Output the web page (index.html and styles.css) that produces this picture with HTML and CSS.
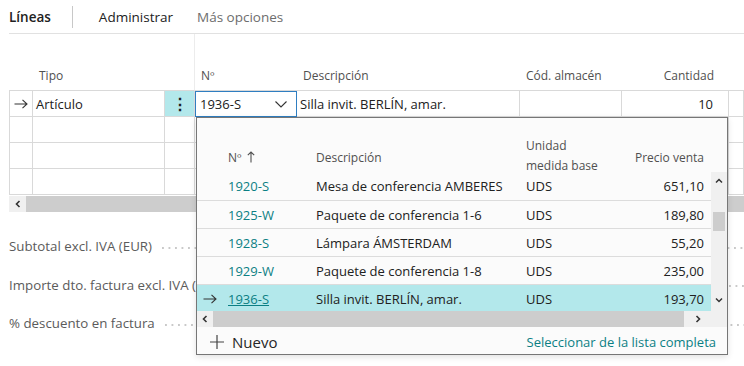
FILE: index.html
```html
<!DOCTYPE html>
<html lang="es">
<head>
    <meta charset="UTF-8">
    <title>Líneas</title>
    <link rel="stylesheet" href="styles.css">
</head>
<body>
<div class="page">
    <div class="tabs">
        <span class="tab active">Líneas</span>
        <span class="tab-sep"></span>
        <span class="tab">Administrar</span>
        <span class="tab muted">Más opciones</span>
    </div>

    <div class="lines">
        <div class="grid">
            <div class="hd"></div>
            <div class="hd">Tipo</div>
            <div class="hd frozen"></div>
            <div class="hd">Nº</div>
            <div class="hd">Descripción</div>
            <div class="hd">Cód. almacén</div>
            <div class="hd num">Cantidad</div>
            <div class="hd"></div>

            <!-- current line -->
            <div class="cell first"><svg class="arrow" width="14" height="10" viewBox="0 0 14 10"><path d="M0.5 5H13M8.5 0.8L13 5L8.5 9.2" fill="none" stroke="#333" stroke-width="1.1"/></svg></div>
            <div class="cell">Artículo</div>
            <div class="cell dots">⋮</div>
            <div class="cell input">1936-S <svg width="12" height="7" viewBox="0 0 12 7"><path d="M0.5 0.5L6 6L11.5 0.5" fill="none" stroke="#333" stroke-width="1.1"/></svg></div>
            <div class="cell">Silla invit. BERLÍN, amar.</div>
            <div class="cell"></div>
            <div class="cell num">10</div>
            <div class="cell"></div>

            <div class="cell first"></div><div class="cell"></div><div class="cell"></div><div class="cell"></div><div class="cell"></div><div class="cell"></div><div class="cell"></div><div class="cell"></div>
            <div class="cell first"></div><div class="cell"></div><div class="cell"></div><div class="cell"></div><div class="cell"></div><div class="cell"></div><div class="cell"></div><div class="cell"></div>
            <div class="cell first"></div><div class="cell"></div><div class="cell"></div><div class="cell"></div><div class="cell"></div><div class="cell"></div><div class="cell"></div><div class="cell"></div>
        </div>
        <div class="hscroll">
            <span class="sbtn"><svg width="8" height="8" viewBox="0 0 8 8"><path d="M5.5 1L2.5 4L5.5 7" fill="none" stroke="#333" stroke-width="1.6"/></svg></span>
            <span class="thumb"></span>
        </div>
    </div>

    <div class="summary">
        <div class="sum-row"><span class="label">Subtotal excl. IVA (EUR)</span><span class="leader"></span></div>
        <div class="sum-row"><span class="label">Importe dto. factura excl. IVA (EUR)</span><span class="leader"></span></div>
        <div class="sum-row"><span class="label">% descuento en factura</span><span class="leader"></span></div>
    </div>

    <!-- lookup popup for the Nº field -->
    <div class="lookup">
        <div class="lk-head">
            <div></div>
            <div>Nº<svg width="8" height="12" viewBox="0 0 8 12"><path d="M4 11.5V1M0.8 4.2L4 1L7.2 4.2" fill="none" stroke="#505050" stroke-width="1.1"/></svg></div>
            <div>Descripción</div>
            <div class="two">Unidad<br>medida base</div>
            <div class="num">Precio venta</div>
            <div></div>
        </div>
        <div class="lk-body">
            <div class="lk-list">
                <div class="lk-row"><div></div><div class="code">1920-S</div><div>Mesa de conferencia AMBERES</div><div>UDS</div><div class="num">651,10</div></div>
                <div class="lk-row"><div></div><div class="code">1925-W</div><div>Paquete de conferencia 1-6</div><div>UDS</div><div class="num">189,80</div></div>
                <div class="lk-row"><div></div><div class="code">1928-S</div><div>Lámpara ÁMSTERDAM</div><div>UDS</div><div class="num">55,20</div></div>
                <div class="lk-row"><div></div><div class="code">1929-W</div><div>Paquete de conferencia 1-8</div><div>UDS</div><div class="num">235,00</div></div>
                <div class="lk-row selected"><div class="mark"><svg width="14" height="10" viewBox="0 0 14 10"><path d="M0.5 5H13M8.5 0.8L13 5L8.5 9.2" fill="none" stroke="#333" stroke-width="1.1"/></svg></div><div class="code link">1936-S</div><div>Silla invit. BERLÍN, amar.</div><div>UDS</div><div class="num">193,70</div></div>
            </div>
            <div class="vscroll">
                <span class="vbtn"><svg width="8" height="6" viewBox="0 0 8 6"><path d="M1 4.5L4 1.5L7 4.5" fill="none" stroke="#333" stroke-width="1.5"/></svg></span>
                <span class="vthumb"></span>
                <span class="vspace"></span>
                <span class="vbtn"><svg width="8" height="6" viewBox="0 0 8 6"><path d="M1 1.5L4 4.5L7 1.5" fill="none" stroke="#333" stroke-width="1.5"/></svg></span>
                <span class="vcorner"></span>
            </div>
            <div class="lk-hscroll">
                <span class="sbtn"><svg width="8" height="8" viewBox="0 0 8 8"><path d="M5.5 1L2.5 4L5.5 7" fill="none" stroke="#333" stroke-width="1.6"/></svg></span>
                <span class="thumb"></span>
                <span class="sbtn"><svg width="8" height="8" viewBox="0 0 8 8"><path d="M2.5 1L5.5 4L2.5 7" fill="none" stroke="#333" stroke-width="1.6"/></svg></span>
            </div>
        </div>
        <div class="lk-foot">
            <span class="new"><svg width="14" height="14" viewBox="0 0 14 14"><path d="M7 0V14M0 7H14" fill="none" stroke="#444" stroke-width="1.2"/></svg> Nuevo</span>
            <span class="full">Seleccionar de la lista completa</span>
        </div>
    </div>
</div>
</body>
</html>
```

FILE: styles.css
```css
body {
    margin: 0;
    font-family: "Open Sans", "Noto Sans", sans-serif;
    font-size: 13px;
    color: #212121;
    background-color: #fff;
}

.page {
    position: relative;
    width: 744px;
    height: 366px;
    overflow: hidden;
}

/* action bar */
.tabs {
    display: flex;
    align-items: center;
    height: 33px;
    margin-left: 9px;
    border-bottom: 1px solid #e1e1e1;
    font-size: 13.5px;
}

.tab {
    margin-right: 24px;
}

.tab.active {
    font-weight: 600;
    margin-right: 21px;
}

.tab.muted {
    color: #6d6d6d;
}

.tab-sep {
    width: 1px;
    height: 22px;
    background-color: #c8c8c8;
    margin-right: 26px;
}

/* lines grid */
.lines {
    margin-left: 9px;
}

.grid {
    display: grid;
    grid-template-columns: 24px 132px 30px 102px 223px 102px 107px 1fr;
    grid-template-rows: 57px repeat(4, 26px);
}

.hd {
    display: flex;
    align-items: flex-end;
    padding: 0 6px 6px;
    color: #505050;
    font-size: 12px;
    border-bottom: 1px solid #d9d9d9;
}

.hd.frozen {
    border-right: 1px solid #ececec;
}

.num {
    justify-content: flex-end;
    text-align: right;
}

.hd.num {
    padding-right: 15px;
}

.cell {
    display: flex;
    align-items: center;
    padding: 0 3px;
    border-right: 1px solid #d9d9d9;
    border-bottom: 1px solid #d9d9d9;
    white-space: nowrap;
    overflow: hidden;
}

.cell.first {
    border-left: 1px solid #d9d9d9;
    justify-content: center;
    padding: 0;
}

.cell.num {
    padding-right: 15px;
}

.cell.dots {
    background-color: #b3e8eb;
    justify-content: center;
    font-weight: 700;
    font-size: 16px;
}

.cell.input {
    justify-content: space-between;
    border: 1px solid #2f7ec1;
    padding: 0 9px 0 4px;
}

.hscroll {
    display: flex;
    height: 16px;
    margin-top: 1px;
    background-color: #f0f0f0;
}

.sbtn {
    display: flex;
    align-items: center;
    justify-content: center;
    width: 17px;
}

.thumb {
    flex: 1;
    background-color: #cdcdcd;
}

/* totals */
.summary {
    margin-top: 15px;
    margin-left: 9px;
    color: #5b5b5b;
    font-size: 13.3px;
}

.sum-row {
    display: flex;
    align-items: center;
    height: 38.5px;
}

.label {
    margin-right: 10px;
    white-space: nowrap;
}

.leader {
    flex: 1;
    height: 2px;
    margin-top: 3px;
    background-image: linear-gradient(to right, #c9c9c9 2px, transparent 2px);
    background-size: 6.5px 2px;
}

/* lookup popup */
.lookup {
    position: absolute;
    left: 196px;
    top: 117px;
    width: 530px;
    height: 236px;
    display: flex;
    flex-direction: column;
    border: 1px solid #767676;
    background-color: #fbfbfb;
    box-shadow: 0 2px 6px rgba(0, 0, 0, 0.12);
}

.lk-head,
.lk-row {
    display: grid;
    grid-template-columns: 25px 88px 210px 100px 91px;
}

.lk-head {
    grid-template-columns: 25px 88px 210px 100px 91px 16px;
    height: 54px;
    align-items: end;
    color: #505050;
    font-size: 12px;
    line-height: 20px;
}

.lk-head > div {
    padding: 0 6px 4px;
}

.lk-head > div.two {
    padding-bottom: 0;
    margin-bottom: -4px;
}

.lk-head svg {
    margin-left: 5px;
    vertical-align: -1px;
}

.lk-head .num {
    padding-right: 7px;
}

.lk-body {
    display: grid;
    grid-template-columns: 1fr 16px;
    grid-template-rows: 139px 16px;
}

.lk-row {
    height: 27px;
    align-items: center;
    border-bottom: 1px solid #dcdcdc;
    white-space: nowrap;
}

.lk-row > div {
    padding: 0 6px;
    overflow: hidden;
}

.lk-row .num {
    padding-right: 7px;
}

.lk-row:first-child {
    height: 28px;
}

.lk-row.selected {
    background-color: #b3e8eb;
    border-bottom: none;
}

.lk-row .mark {
    display: flex;
    padding: 0 0 0 6px;
}

.code {
    color: #0b7f84;
}

.code.link {
    text-decoration: underline;
}

.vscroll {
    grid-row: 1 / 3;
    grid-column: 2;
    display: flex;
    flex-direction: column;
    background-color: #f0f0f0;
}

.vbtn {
    display: flex;
    align-items: center;
    justify-content: center;
    height: 14px;
    margin-top: 2px;
}

.vthumb {
    height: 19px;
    margin: 24px 2px 0;
    background-color: #cdcdcd;
}

.vspace {
    flex: 1;
}

.vcorner {
    height: 20px;
}

.lk-hscroll {
    display: flex;
    background-color: #f0f0f0;
}

.lk-hscroll .sbtn {
    width: 16px;
}

.lk-hscroll .sbtn:last-child {
    width: 27px;
}

.lk-foot {
    flex: 1;
    display: flex;
    align-items: center;
    justify-content: space-between;
    padding: 2px 11px 0 13px;
}

.new {
    display: flex;
    align-items: center;
    font-size: 15px;
    color: #262626;
}

.new svg {
    margin-right: 8px;
}

.full {
    color: #0b7f84;
}
```
